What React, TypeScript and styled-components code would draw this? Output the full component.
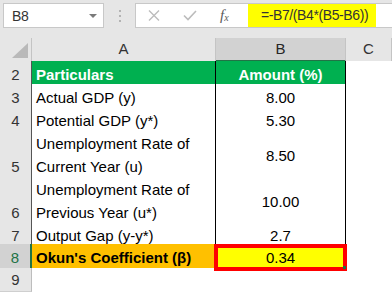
import React from 'react';
import styled, { createGlobalStyle } from 'styled-components';

const GlobalStyle = createGlobalStyle`
  html, body {
    margin: 0;
    padding: 0;
    background: #fff;
  }
  body {
    font-family: "Liberation Sans", Arial, sans-serif;
  }
`;

const COLUMNS = '32px 184px 130px 1fr';

type DataRow = {
  n: number;
  label: string;
  value: string;
  height: number;
};

const rows: DataRow[] = [
  { n: 3, label: 'Actual GDP (y)', value: '8.00', height: 23 },
  { n: 4, label: 'Potential GDP (y*)', value: '5.30', height: 23 },
  { n: 5, label: 'Unemployment Rate of Current Year (u)', value: '8.50', height: 46 },
  { n: 6, label: 'Unemployment Rate of Previous Year (u*)', value: '10.00', height: 46 },
  { n: 7, label: 'Output Gap (y-y*)', value: '2.7', height: 22 },
];

export default function App() {
  return (
    <>
      <GlobalStyle />
      <Sheet>
        <FormulaBar>
          <NameBox>
            <span>B8</span>
            <DropArrow />
          </NameBox>
          <Grip>
            <i />
            <i />
            <i />
          </Grip>
          <FormulaBox>
            <Buttons>
              <svg width="12" height="11" viewBox="0 0 12 11">
                <path d="M1 0.5 L11 10.5 M11 0.5 L1 10.5" stroke="#bcbcbc" strokeWidth="1.4" fill="none" />
              </svg>
              <svg width="14" height="11" viewBox="0 0 14 11">
                <path d="M1 5.5 L5 9.5 L13 1" stroke="#bcbcbc" strokeWidth="1.6" fill="none" />
              </svg>
              <Fx>
                f<sub>x</sub>
              </Fx>
            </Buttons>
            <FormulaInput>=-B7/(B4*(B5-B6))</FormulaInput>
          </FormulaBox>
        </FormulaBar>

        <HeaderRow>
          <Corner>
            <svg width="16" height="15" viewBox="0 0 16 15">
              <polygon points="16,0 16,15 0,15" fill="#b9b9b9" />
            </svg>
          </Corner>
          <ColHeader>A</ColHeader>
          <ColHeader $selected>B</ColHeader>
          <ColHeader>C</ColHeader>
        </HeaderRow>

        <Row $height={23}>
          <RowHead>2</RowHead>
          <Cell $fill="#00b050" $bold $color="#fff">Particulars</Cell>
          <Cell $fill="#00b050" $bold $color="#fff" $center>Amount (%)</Cell>
          <Blank />
        </Row>

        {rows.map((r) => (
          <Row key={r.n} $height={r.height}>
            <RowHead>{r.n}</RowHead>
            <Cell>{r.label}</Cell>
            <Cell $center>{r.value}</Cell>
            <Blank />
          </Row>
        ))}

        <Row $height={24}>
          <RowHead $selected>8</RowHead>
          <Cell $fill="#ffc000" $bold>Okun's Coefficient (β)</Cell>
          <ActiveCell $fill="#ffff00" $center>0.34</ActiveCell>
          <Blank />
        </Row>

        <Row $height={24}>
          <RowHead $plain>9</RowHead>
          <Blank />
          <Blank />
          <Blank />
        </Row>
      </Sheet>
    </>
  );
}

const Sheet = styled.div`
  width: 392px;
  height: 292px;
  overflow: hidden;
  background: #fff;
  color: #000;
`;

const FormulaBar = styled.div`
  display: flex;
  align-items: flex-start;
  box-sizing: border-box;
  height: 38px;
  padding: 3px 0 0 3px;
  background: #e6e6e6;
  font-size: 14px;
  letter-spacing: -0.4px;
  color: #333;
`;

const NameBox = styled.div`
  display: flex;
  align-items: center;
  justify-content: space-between;
  box-sizing: border-box;
  width: 101px;
  height: 25px;
  padding: 0 6px 0 8px;
  background: #fff;
  border: 1px solid #c8c8c8;
`;

const DropArrow = styled.span`
  width: 0;
  height: 0;
  border-left: 4px solid transparent;
  border-right: 4px solid transparent;
  border-top: 4px solid #7a7a7a;
`;

const Grip = styled.div`
  display: flex;
  flex-direction: column;
  align-items: center;
  gap: 3px;
  width: 31px;
  padding-top: 7px;

  & i {
    display: block;
    width: 2px;
    height: 2px;
    background: #b3b3b3;
  }
`;

const FormulaBox = styled.div`
  display: flex;
  flex: 1;
  box-sizing: border-box;
  height: 25px;
  background: #fff;
  border: 1px solid #c8c8c8;
  border-right: none;
`;

const Buttons = styled.div`
  display: flex;
  align-items: center;
  gap: 23px;
  width: 112px;
  padding-left: 12px;
  box-sizing: border-box;
`;

const Fx = styled.span`
  font-family: "Liberation Serif", "Times New Roman", serif;
  font-style: italic;
  font-size: 15px;
  letter-spacing: 0;
  color: #5a5a5a;
  line-height: 1;

  & sub {
    font-size: 10px;
    vertical-align: -1px;
  }
`;

const FormulaInput = styled.div`
  width: 128px;
  box-sizing: border-box;
  padding-left: 13px;
  background: #ffff00;
  line-height: 23px;
  white-space: nowrap;
`;

const HeaderRow = styled.div`
  display: grid;
  grid-template-columns: ${COLUMNS};
  height: 23px;
  background: #e6e6e6;
`;

const Corner = styled.div`
  display: flex;
  align-items: flex-end;
  justify-content: flex-end;
  box-sizing: border-box;
  padding: 0 3px 3px 0;
  border-right: 1px solid #c4c4c4;
  border-bottom: 1px solid #bdbdbd;
`;

const ColHeader = styled.div<{ $selected?: boolean }>`
  box-sizing: border-box;
  text-align: center;
  font-size: 15px;
  line-height: 22px;
  color: ${(p) => (p.$selected ? '#262626' : '#333')};
  background: ${(p) => (p.$selected ? '#d2d2d2' : 'transparent')};
  border-right: 1px solid #c4c4c4;
  border-bottom: ${(p) => (p.$selected ? '2px solid #217346' : '1px solid #bdbdbd')};
`;

const Row = styled.div<{ $height: number }>`
  display: grid;
  grid-template-columns: ${COLUMNS};
  height: ${(p) => p.$height}px;
`;

const RowHead = styled.div<{ $selected?: boolean; $plain?: boolean }>`
  display: flex;
  align-items: flex-end;
  justify-content: center;
  box-sizing: border-box;
  font-size: 15px;
  line-height: 22px;
  color: ${(p) => (p.$selected ? '#217346' : '#333')};
  background: ${(p) => (p.$selected ? '#d2d2d2' : '#e6e6e6')};
  border-bottom: 1px solid #cfcfcf;
  border-right: ${(p) =>
    p.$selected ? '2px solid #217346' : p.$plain ? '1px solid #bdbdbd' : '1px solid #555'};
`;

const Cell = styled.div<{ $fill?: string; $bold?: boolean; $color?: string; $center?: boolean }>`
  display: flex;
  align-items: center;
  justify-content: ${(p) => (p.$center ? 'center' : 'flex-start')};
  box-sizing: border-box;
  padding: 2px 4px 0;
  font-size: 15px;
  line-height: 23px;
  font-weight: ${(p) => (p.$bold ? 700 : 400)};
  color: ${(p) => p.$color || '#000'};
  background: ${(p) => p.$fill || '#fff'};
  border-right: 1px solid #000;
  border-bottom: 1px solid #000;
`;

const ActiveCell = styled(Cell)`
  position: relative;

  &::after {
    content: '';
    position: absolute;
    top: 0;
    left: -2px;
    right: -2px;
    bottom: -2px;
    border: 4px solid #ff0000;
    z-index: 1;
  }

  &::before {
    content: '';
    position: absolute;
    right: -1px;
    bottom: 0;
    width: 3px;
    height: 3px;
    background: #217346;
    z-index: 2;
  }
`;

const Blank = styled.div`
  background: #fff;
`;
